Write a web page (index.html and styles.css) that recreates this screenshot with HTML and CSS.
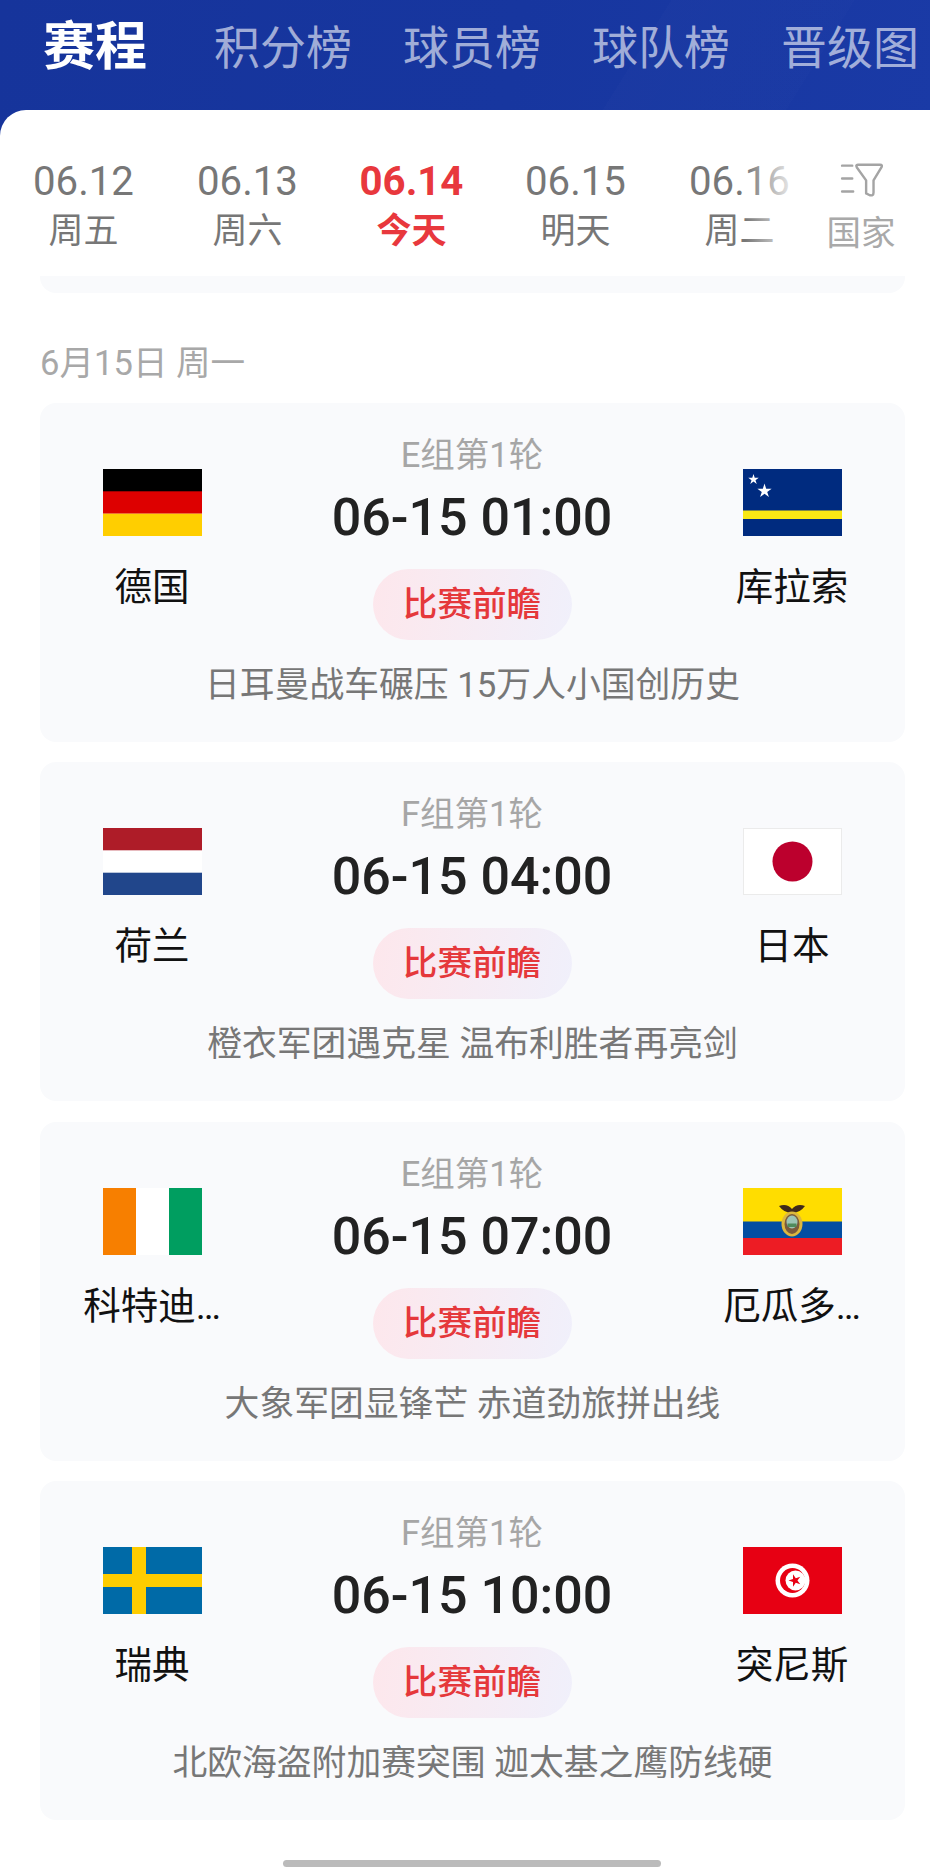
FILE: index.html
```html
<!DOCTYPE html>
<html lang="zh-CN">
<head>
  <meta charset="UTF-8">
  <meta name="viewport" content="width=device-width, initial-scale=1.0">
  <link rel="stylesheet" href="styles.css">
</head>
<body>

  <div class="page">
    <div class="top-tabs">
      <span class="top-tab active">赛程</span>
      <span class="top-tab">积分榜</span>
      <span class="top-tab">球员榜</span>
      <span class="top-tab">球队榜</span>
      <span class="top-tab">晋级图</span>
    </div>

    <div class="sheet">
      <div class="date-bar">
        <div class="date-item"><span class="date-num">06.12</span><span class="date-day">周五</span></div>
        <div class="date-item"><span class="date-num">06.13</span><span class="date-day">周六</span></div>
        <div class="date-item today"><span class="date-num">06.14</span><span class="date-day">今天</span></div>
        <div class="date-item"><span class="date-num">06.15</span><span class="date-day">明天</span></div>
        <div class="date-item"><span class="date-num">06.16</span><span class="date-day">周二</span></div>
        <div class="filter">
          <svg class="filter-icon" viewBox="0 0 46 40" width="43" height="37" fill="none" stroke="#a4a4a4" stroke-width="2.6" stroke-linecap="round" stroke-linejoin="round">
            <path d="M2 5H13M2 19H13M2 33H14"/>
            <path d="M19 4H43Q46 4 44.5 7L36 21V34Q36 38 32 37L28 35V21L18 7Q16.500 4 19 4Z"/>
          </svg>
          <span class="filter-label">国家</span>
        </div>
      </div>

      <div class="card-tail"></div>
      <h2 class="day-title">6月15日 周一</h2>

      <div class="match-list">

        <div class="match">
          <div class="match-main">
            <div class="team">
              <svg class="flag" viewBox="0 0 99 67">
                <rect width="99" height="23" fill="#000"/>
                <rect y="22.300" width="99" height="22.400" fill="#dd0000"/>
                <rect y="44.700" width="99" height="22.300" fill="#ffce00"/>
              </svg>
              <span class="team-name">德国</span>
            </div>
            <div class="match-info">
              <span class="round">E组第1轮</span>
              <span class="time">06-15 01:00</span>
              <span class="preview">比赛前瞻</span>
            </div>
            <div class="team">
              <svg class="flag" viewBox="0 0 99 67">
                <rect width="99" height="67" fill="#002b7f"/>
                <rect y="41.500" width="99" height="8.500" fill="#f9e814"/>
                <polygon transform="translate(10.500 10.500) scale(5.500)" fill="#fff" points="0,-1 .224,-.309 .951,-.309 .363,.118 .588,.809 0,.382 -.588,.809 -.363,.118 -.951,-.309 -.224,-.309"/>
                <polygon transform="translate(21.500 22) scale(7.500)" fill="#fff" points="0,-1 .224,-.309 .951,-.309 .363,.118 .588,.809 0,.382 -.588,.809 -.363,.118 -.951,-.309 -.224,-.309"/>
              </svg>
              <span class="team-name">库拉索</span>
            </div>
          </div>
          <p class="summary">日耳曼战车碾压 15万人小国创历史</p>
        </div>

        <div class="match">
          <div class="match-main">
            <div class="team">
              <svg class="flag" viewBox="0 0 99 67">
                <rect width="99" height="23" fill="#ae1c28"/>
                <rect y="22.300" width="99" height="22.400" fill="#fff"/>
                <rect y="44.700" width="99" height="22.300" fill="#21468b"/>
              </svg>
              <span class="team-name">荷兰</span>
            </div>
            <div class="match-info">
              <span class="round">F组第1轮</span>
              <span class="time">06-15 04:00</span>
              <span class="preview">比赛前瞻</span>
            </div>
            <div class="team">
              <svg class="flag" viewBox="0 0 99 67">
                <rect x=".5" y=".5" width="98" height="66" fill="#fff" stroke="#ebebeb"/>
                <circle cx="49.500" cy="33.500" r="20" fill="#bc002d"/>
              </svg>
              <span class="team-name">日本</span>
            </div>
          </div>
          <p class="summary">橙衣军团遇克星 温布利胜者再亮剑</p>
        </div>

        <div class="match">
          <div class="match-main">
            <div class="team">
              <svg class="flag" viewBox="0 0 99 67">
                <rect width="33.500" height="67" fill="#f77f00"/>
                <rect x="33" width="33" height="67" fill="#fff"/>
                <rect x="66" width="33" height="67" fill="#009e60"/>
              </svg>
              <span class="team-name">科特迪…</span>
            </div>
            <div class="match-info">
              <span class="round">E组第1轮</span>
              <span class="time">06-15 07:00</span>
              <span class="preview">比赛前瞻</span>
            </div>
            <div class="team">
              <svg class="flag" viewBox="0 0 99 67">
                <rect width="99" height="34" fill="#ffdd00"/>
                <rect y="33.500" width="99" height="17" fill="#034ea2"/>
                <rect y="50" width="99" height="17" fill="#ed1c24"/>
                <path d="M36 18Q44 15 49 21Q54 15 62 18Q57 25 49 25Q41 25 36 18Z" fill="#3f2a1a"/>
                <ellipse cx="49" cy="36" rx="10.500" ry="12.500" fill="#dcb73e"/>
                <ellipse cx="49" cy="36" rx="7.500" ry="10" fill="#7a5a3c"/>
                <ellipse cx="49" cy="34" rx="5.500" ry="6.500" fill="#9cc4b4"/>
                <rect x="44.500" y="35.500" width="9" height="3.500" fill="#4f8a5c"/>
              </svg>
              <span class="team-name">厄瓜多…</span>
            </div>
          </div>
          <p class="summary">大象军团显锋芒 赤道劲旅拼出线</p>
        </div>

        <div class="match">
          <div class="match-main">
            <div class="team">
              <svg class="flag" viewBox="0 0 99 67">
                <rect width="99" height="67" fill="#006aa7"/>
                <rect x="29" width="14" height="67" fill="#fecc00"/>
                <rect y="27" width="99" height="13" fill="#fecc00"/>
              </svg>
              <span class="team-name">瑞典</span>
            </div>
            <div class="match-info">
              <span class="round">F组第1轮</span>
              <span class="time">06-15 10:00</span>
              <span class="preview">比赛前瞻</span>
            </div>
            <div class="team">
              <svg class="flag" viewBox="0 0 99 67">
                <rect width="99" height="67" fill="#e70013"/>
                <circle cx="49.500" cy="33.500" r="17" fill="#fff"/>
                <circle cx="49.500" cy="33.500" r="12.500" fill="#e70013"/>
                <circle cx="52.500" cy="33.500" r="10" fill="#fff"/>
                <polygon transform="translate(52 33.500) rotate(-90) scale(6.500)" fill="#e70013" points="0,-1 .224,-.309 .951,-.309 .363,.118 .588,.809 0,.382 -.588,.809 -.363,.118 -.951,-.309 -.224,-.309"/>
              </svg>
              <span class="team-name">突尼斯</span>
            </div>
          </div>
          <p class="summary">北欧海盗附加赛突围 迦太基之鹰防线硬</p>
        </div>

      </div>

      <div class="home-bar"></div>
    </div>
  </div>

</body>
</html>
```

FILE: styles.css
```css
* {
  margin: 0;
  padding: 0;
  box-sizing: border-box;
}

body {
  font-family: Roboto, "Noto Sans CJK SC", sans-serif;
  background-color: #1a3aa0;
}

.page {
  width: 930px;
  height: 1869px;
  overflow: hidden;
  background:
    linear-gradient(122deg, transparent 66%, rgba(255, 255, 255, 0.012) 66%, rgba(255, 255, 255, 0.006) 84%, transparent 84%),
    linear-gradient(100deg, #16349b 0%, #17369f 55%, #1a3aa6 100%);
  background-size: 100% 140px;
  background-repeat: no-repeat;
}

/* top tabs */
.top-tabs {
  display: flex;
  align-items: center;
  gap: 51px;
  height: 110px;
  padding: 0 0 14px 43px;
  white-space: nowrap;
}

.top-tab {
  font-size: 46px;
  line-height: 60px;
  color: rgba(255, 255, 255, 0.6);
}

.top-tab.active {
  font-size: 52px;
  font-weight: 700;
  color: #fff;
  margin-right: 16px;
}

/* white sheet */
.sheet {
  background-color: #fff;
  border-radius: 26px 26px 0 0;
  height: 1759px;
}

.date-bar {
  position: relative;
  display: flex;
  height: 166px;
  padding: 47px 0 0 1.5px;
  overflow: hidden;
}

.date-item {
  flex: 0 0 164px;
  display: flex;
  flex-direction: column;
  align-items: center;
  color: #777;
}

.date-num {
  font-size: 40.200px;
  line-height: 50px;
}

.date-day {
  font-size: 35px;
  line-height: 44px;
  margin-top: 3px;
}

.today {
  color: #e8383d;
  font-weight: 700;
}

.filter {
  position: absolute;
  top: 0;
  right: 0;
  width: 185px;
  height: 166px;
  padding: 51px 0 0 47px;
  display: flex;
  flex-direction: column;
  align-items: center;
  background: linear-gradient(90deg, rgba(255, 255, 255, 0), #fff 55px);
}

.filter-icon {
  display: block;
}

.filter-label {
  font-size: 34.500px;
  line-height: 44px;
  margin-top: 13px;
  color: #a9a9a9;
}

/* bottom of the card scrolled under the date bar */
.card-tail {
  height: 17px;
  margin: 0 25px 0 40px;
  background-color: #f9fafc;
  border-radius: 0 0 16px 16px;
}

.day-title {
  font-size: 34.600px;
  font-weight: 400;
  line-height: 44px;
  margin: 48px 0 0 40px;
  color: #a8a8a8;
}

/* match cards */
.match-list {
  display: flex;
  flex-direction: column;
  gap: 20.33px;
  margin: 18px 25px 0 40px;
}

.match {
  height: 339px;
  padding-top: 30px;
  background-color: #f9fafc;
  border-radius: 16px;
}

.match-main {
  display: flex;
  justify-content: space-between;
  padding: 0 43px 0 42px;
}

.team {
  width: 140px;
  padding-top: 36px;
  display: flex;
  flex-direction: column;
  align-items: center;
}

.flag {
  display: block;
  width: 99px;
  height: 67px;
}

.team-name {
  margin-top: 29px;
  font-size: 37.500px;
  line-height: 44px;
  color: #111;
  text-align: center;
  white-space: nowrap;
}

.match-info {
  display: flex;
  flex-direction: column;
  align-items: center;
}

.round {
  font-size: 34.500px;
  line-height: 44px;
  color: #a6a6a6;
}

.time {
  margin-top: 11px;
  font-size: 52px;
  font-weight: 500;
  line-height: 60px;
  color: #222;
}

.preview {
  width: 199px;
  height: 71px;
  margin-top: 21px;
  border-radius: 36px;
  background: linear-gradient(100deg, #fde7ec, #f0f0fb);
  font-size: 34.600px;
  font-weight: 500;
  line-height: 71px;
  color: #e5383b;
  text-align: center;
}

.summary {
  margin-top: 25px;
  font-size: 34.800px;
  line-height: 40px;
  color: #777;
  text-align: center;
}

.home-bar {
  width: 378px;
  height: 7px;
  margin: 40px 0 0 283px;
  border-radius: 4px;
  background-color: #bbb;
}
```
